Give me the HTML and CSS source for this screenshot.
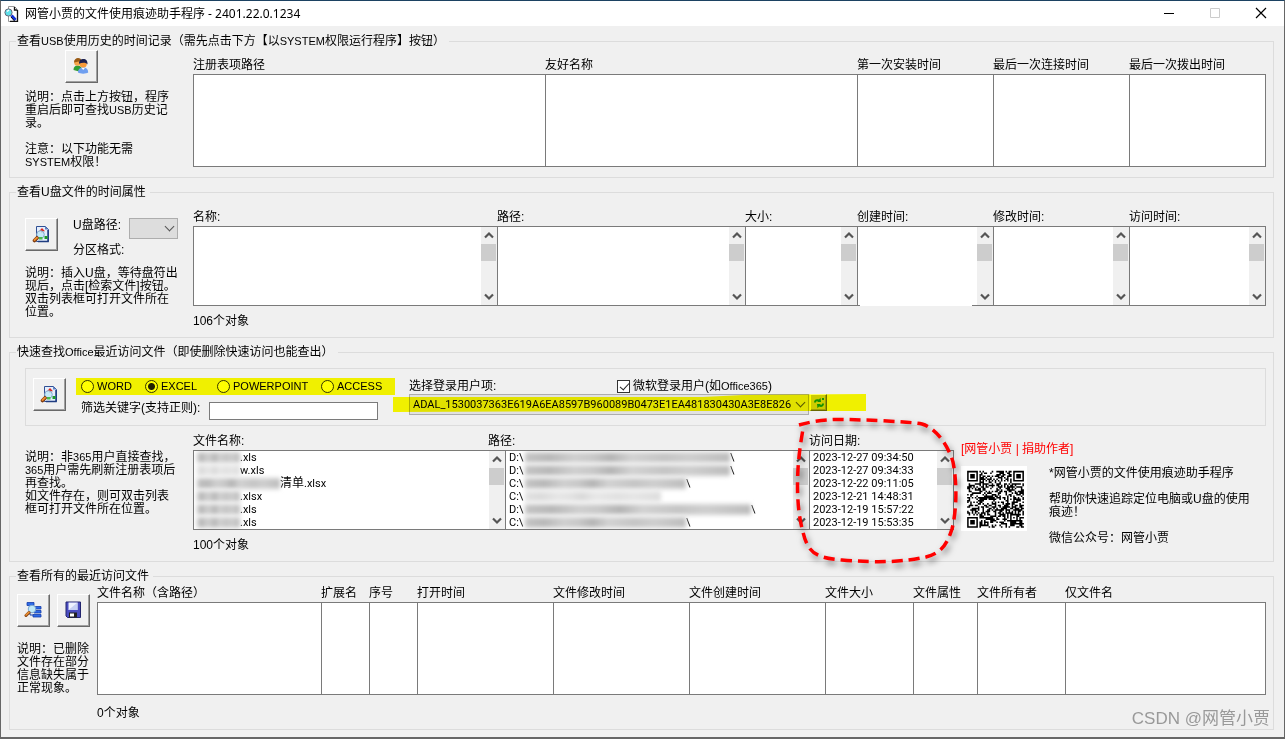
FILE: index.html
```html
<!DOCTYPE html>
<html lang="zh-CN">
<head>
<meta charset="utf-8">
<title>网管小贾的文件使用痕迹助手程序</title>
<link rel="stylesheet" href="styles.css">
</head>
<body>
<svg class="defs" aria-hidden="true">
  <symbol id="i-up" viewBox="0 0 16 17"><path d="M4 10.5 8 6.5l4 4" fill="none" stroke="#555" stroke-width="2.2"/></symbol>
  <symbol id="i-down" viewBox="0 0 16 17"><path d="M4 6.5l4 4 4-4" fill="none" stroke="#555" stroke-width="2.2"/></symbol>
  <symbol id="i-search" viewBox="0 0 18 18">
    <path d="M4.500 1.500h9l3 3v12h-12z" fill="#e4eefc" stroke="#2f4f94"/>
    <path d="M16 5v11.500H6" fill="none" stroke="#1f3c80" stroke-width="1.500"/>
    <path d="M13 1v3.500h3.500z" fill="#5f7fc0"/>
    <path d="M10 3l3 3.200H7z" fill="#e02418"/><path d="M9 6h2v2H9z" fill="#d43a20"/>
    <circle cx="8.500" cy="9.500" r="3.800" fill="#c0e8f8" fill-opacity=".9" stroke="#86a8cc"/>
    <path d="M12.500 11h3v3h-3z" fill="#1c9a28"/><path d="M7 12h3.500v2.500H7z" fill="#49b94a"/>
    <path d="M5 13 2.500 15.500" stroke="#7a3a10" stroke-width="3.600" stroke-linecap="round"/>
    <path d="M5 12.700 2.500 15" stroke="#ee8a2c" stroke-width="1.900" stroke-linecap="round"/>
  </symbol>
</svg>
<div class="window">
  <header class="titlebar">
    <svg class="app-icon" viewBox="0 0 16 16" aria-hidden="true">
      <path d="M4.500.500h6l3 3v12h-9z" fill="#fff" stroke="#999"/>
      <path d="M10.500 1v3H13M13.500 4v11.500H6" fill="none" stroke="#111" stroke-width="1.300"/>
      <circle cx="4.500" cy="6.500" r="3.600" fill="#5fe0ea" stroke="#667"/>
      <path d="M3 5.500 5 4" stroke="#fff" stroke-width="1.400"/>
      <path d="M7.500 9.500l4 4.500" stroke="#1030d8" stroke-width="3"/>
      <path d="M7 11l3.500 4" stroke="#111"/>
    </svg>
    <h1>网管小贾的文件使用痕迹助手程序 - 2401.22.0.1234</h1>
    <button class="sys" aria-label="最小化"><svg viewBox="0 0 12 12"><path d="M1 6.500h10" stroke="#000"/></svg></button>
    <button class="sys" aria-label="最大化" disabled><svg viewBox="0 0 12 12"><path d="M1.500 1.500h9v9h-9z" fill="none" stroke="#ccc"/></svg></button>
    <button class="sys" aria-label="关闭"><svg viewBox="0 0 12 12"><path d="M1 1l10 10M11 1 1 11" stroke="#000" stroke-width="1.200"/></svg></button>
  </header>

  <main>
    <fieldset>
      <legend>查看<span class="en">USB</span>使用历史的时间记录（需先点击下方【以<span class="en">SYSTEM</span>权限运行程序】按钮）</legend>
      <div class="group usb">
        <div class="side">
          <button class="tool" aria-label="以SYSTEM权限运行程序">
            <svg viewBox="0 0 18 18">
              <path d="M1.500 13c0-3 1.500-4.500 4-4.500S10 10 10 13l-3 1.500z" fill="#2f9e33"/>
              <circle cx="5.500" cy="5.500" r="3.300" fill="#f6a54a"/><path d="M2 5.500C2 2.500 4 1 6 1s3.500 1 3.500 3z" fill="#9a5a14"/>
              <path d="M6 15.500c0-3.500 2-5 5.200-5s5 1.500 5 5c-2 1.500-8 1.500-10.200 0z" fill="#6f9ff0"/>
              <path d="M9.500 11h3.400L11.200 13z" fill="#fff"/>
              <circle cx="11.200" cy="7" r="3.600" fill="#f79a3a"/><path d="M7 6.800C7 3.200 9 2 11.500 2S15.700 3.500 15.500 7.500c-1-2-5-2.500-8.500-.7z" fill="#1d2150"/>
            </svg>
          </button>
          <p>说明：点击上方按钮，程序<br>重启后即可查找<span class="en">USB</span>历史记<br>录。<br><br>注意：以下功能无需<br><span class="en">SYSTEM</span>权限！</p>
        </div>
        <div class="lists">
          <div class="heads cols-usb"><span>注册表项路径</span><span>友好名称</span><span>第一次安装时间</span><span>最后一次连接时间</span><span>最后一次拨出时间</span></div>
          <div class="boxes tall cols-usb"><ul></ul><ul></ul><ul></ul><ul></ul><ul></ul></div>
        </div>
      </div>
    </fieldset>

    <fieldset>
      <legend>查看U盘文件的时间属性</legend>
      <div class="group disk">
        <div class="side">
          <div class="disk-row">
            <button class="tool" aria-label="检索文件"><svg viewBox="0 0 18 18"><use href="#i-search"/></svg></button>
            <div class="disk-fields">
              <label for="drive">U盘路径:</label>
              <span class="combo off"><select id="drive" disabled><option></option></select></span>
              <span>分区格式:</span>
            </div>
          </div>
          <p>说明：插入U盘，等待盘符出<br>现后，点击[检索文件]按钮。<br>双击列表框可打开文件所在<br>位置。</p>
        </div>
        <div class="lists">
          <div class="heads cols-disk"><span>名称:</span><span>路径:</span><span>大小:</span><span>创建时间:</span><span>修改时间:</span><span>访问时间:</span></div>
          <div class="boxes cols-disk">
            <div class="box"><ul></ul><div class="scroll"><button aria-label="向上"><svg><use href="#i-up"/></svg></button><i></i><button aria-label="向下"><svg><use href="#i-down"/></svg></button></div></div>
            <div class="box"><ul></ul><div class="scroll"><button aria-label="向上"><svg><use href="#i-up"/></svg></button><i></i><button aria-label="向下"><svg><use href="#i-down"/></svg></button></div></div>
            <div class="box"><ul></ul><div class="scroll"><button aria-label="向上"><svg><use href="#i-up"/></svg></button><i></i><button aria-label="向下"><svg><use href="#i-down"/></svg></button></div></div>
            <div class="box erased"><ul></ul><div class="scroll"><button aria-label="向上"><svg><use href="#i-up"/></svg></button><i></i><button aria-label="向下"><svg><use href="#i-down"/></svg></button></div></div>
            <div class="box"><ul></ul><div class="scroll"><button aria-label="向上"><svg><use href="#i-up"/></svg></button><i></i><button aria-label="向下"><svg><use href="#i-down"/></svg></button></div></div>
            <div class="box"><ul></ul><div class="scroll"><button aria-label="向上"><svg><use href="#i-up"/></svg></button><i></i><button aria-label="向下"><svg><use href="#i-down"/></svg></button></div></div>
          </div>
          <output class="count">106个对象</output>
        </div>
      </div>
    </fieldset>

    <fieldset>
      <legend>快速查找<span class="en">Office</span>最近访问文件（即使删除快速访问也能查出）</legend>
      <div class="office">
        <div class="panel">
          <button class="tool" aria-label="查找"><svg viewBox="0 0 18 18"><use href="#i-search"/></svg></button>
          <div class="filters">
            <div class="apps" role="radiogroup" aria-label="程序">
              <label><input type="radio" name="app">WORD</label>
              <label><input type="radio" name="app" checked>EXCEL</label>
              <label><input type="radio" name="app">POWERPOINT</label>
              <label><input type="radio" name="app">ACCESS</label>
            </div>
            <div class="keyword"><label for="kw">筛选关键字(支持正则):</label><input id="kw" type="text"></div>
          </div>
          <div class="account">
            <div class="account-head">
              <label for="user">选择登录用户项:</label>
              <label class="ms"><input type="checkbox" checked><span>微软登录用户(如<span class="en">Office365</span>)</span></label>
            </div>
            <div class="account-row">
              <span class="combo"><select id="user"><option>ADAL_1530037363E619A6EA8597B960089B0473E1EA481830430A3E8E826</option></select></span>
              <button class="refresh" aria-label="刷新"><svg viewBox="0 0 12 12"><path d="M1 5.500C1 2.500 3.500 1.500 6 2.500L7.500.8 8 5H4l1-1C4 3.700 3 4.300 3 5.500zM11 6.500c0 3-2.500 4-5 3l-1.500 1.700L4 7h4L7 8c1 .3 2-.3 2-1.500z" fill="#16932c"/><path d="M9 1h2v2H9z" fill="#16932c"/></svg></button>
              <svg class="marker" viewBox="0 0 473 18" aria-hidden="true"><path d="M0 3H310L350 1 473 0V17H300L0 18z" fill="#ff0"/></svg>
            </div>
          </div>
        </div>
        <div class="recent">
          <div class="side">
            <p>说明：非<span class="en">365</span>用户直接查找，<br><span class="en">365</span>用户需先刷新注册表项后<br>再查找。<br>如文件存在，则可双击列表<br>框可打开文件所在位置。</p>
          </div>
          <div class="lists">
            <div class="heads heads-office"><span>文件名称:</span><span>路径:</span><span>访问日期:</span></div>
            <div class="boxes cols-office">
              <div class="box"><ul class="names">
                <li><b class="blur w1"></b>.xls</li><li><b class="blur w1 pale"></b>w.xls</li><li><b class="blur w2"></b><span class="zh">清单</span>.xlsx</li><li><b class="blur w1"></b>.xlsx</li><li><b class="blur w1"></b>.xls</li><li><b class="blur w1"></b>.xls</li></ul>
                <div class="scroll"><button aria-label="向上"><svg><use href="#i-up"/></svg></button><i></i><button aria-label="向下"><svg><use href="#i-down"/></svg></button></div></div>
              <div class="box"><ul class="paths">
                <li><em>D:\</em><b class="blur w5"></b>\</li><li><em>D:\</em><b class="blur w5"></b>\</li><li><em>C:\</em><b class="blur w4"></b>\</li><li><em>C:\</em><b class="blur w3 pale"></b></li><li><em>D:\</em><b class="blur w6"></b>\</li><li><em>C:\</em><b class="blur w4"></b>\</li></ul>
                <div class="scroll"><button aria-label="向上"><svg><use href="#i-up"/></svg></button><i></i><button aria-label="向下"><svg><use href="#i-down"/></svg></button></div></div>
              <div class="box"><ul>
                <li>2023-12-27 09:34:50</li><li>2023-12-27 09:34:33</li><li>2023-12-22 09:11:05</li><li>2023-12-21 14:48:31</li><li>2023-12-19 15:57:22</li><li>2023-12-19 15:53:35</li></ul>
                <div class="scroll"><button aria-label="向上"><svg><use href="#i-up"/></svg></button><i></i><button aria-label="向下"><svg><use href="#i-down"/></svg></button></div></div>
            </div>
            <output class="count">100个对象</output>
            <svg class="ring" viewBox="0 0 180 160" aria-hidden="true"><path d="M12 14C40 6 60 9 80 9c20 1 45 2 55 4 14 4 26 21 31 38 4 20 4 47-1 67-5 15-10 24-26 28-22 5-49 6-84 3C32 147 21 144 16 121 10 100 10 75 11 58c1-16 3-28 5-40" fill="none" stroke="#f00" stroke-width="3.500" stroke-dasharray="11 6"/></svg>
          </div>
          <div class="about">
            <a href="#donate">[网管小贾 | 捐助作者]</a>
            <div class="about-row">
              <svg id="qr" viewBox="-4 -3 43 42" role="img" aria-label="二维码"></svg>
              <p>*网管小贾的文件使用痕迹助手程序<br><br>帮助你快速追踪定位电脑或U盘的使用<br>痕迹！<br><br>微信公众号：网管小贾</p>
            </div>
          </div>
        </div>
      </div>
    </fieldset>

    <fieldset>
      <legend>查看所有的最近访问文件</legend>
      <div class="group all">
        <div class="side">
          <div class="tools">
            <button class="tool" aria-label="查询"><svg viewBox="0 0 18 18">
              <path d="M3 1.500h7v3H3zM10 5.500h7v2.500h-7zM10 9.500h7V12h-7zM9 13.500h8V16H9z" fill="#2d6be8" stroke="#143ca8" stroke-width=".8"/><path d="M6 5v9h3" fill="none" stroke="#143ca8"/>
              <circle cx="8" cy="8" r="3.800" fill="#bfeaf8" stroke="#7aa4d0"/>
              <path d="M5 11.500 2 14.500" stroke="#8a4412" stroke-width="3" stroke-linecap="round"/><path d="M5 11.200 2 14" stroke="#f09434" stroke-width="1.500" stroke-linecap="round"/></svg></button>
            <button class="tool" aria-label="保存"><svg viewBox="0 0 18 18">
              <path d="M2 1h14.500v15.500H3.500L2 15z" fill="#4a4cc0" stroke="#22246e"/>
              <path d="M4.500 1.500h9V9h-9z" fill="#eef2ff"/><path d="M13.500 1.500V9h-9z" fill="#c6d0f4"/>
              <path d="M5 11.500h8v5H5z" fill="#222"/><path d="M6 12.500h4v3H6z" fill="#fff"/></svg></button>
          </div>
          <p>说明：已删除<br>文件存在部分<br>信息缺失属于<br>正常现象。</p>
        </div>
        <div class="lists">
          <div class="heads cols-all"><span>文件名称（含路径）</span><span>扩展名</span><span>序号</span><span>打开时间</span><span>文件修改时间</span><span>文件创建时间</span><span>文件大小</span><span>文件属性</span><span>文件所有者</span><span>仅文件名</span></div>
          <div class="boxes tall cols-all"><ul></ul><ul></ul><ul></ul><ul></ul><ul></ul><ul></ul><ul></ul><ul></ul><ul></ul><ul></ul></div>
          <output class="count roomy">0个对象</output>
        </div>
      </div>
    </fieldset>
  </main>
  <div class="watermark">CSDN @网管小贾</div>
</div>
<script src="qr.js"></script>
</body>
</html>
```
FILE: styles.css
```css
* { box-sizing: border-box; }
body {
  margin: 0;
  background: #f0f0f0;
  color: #000;
  font: 12px/13px "Liberation Sans", "Noto Sans CJK SC", sans-serif;
  text-spacing-trim: space-all;
}
button, input, select { font: inherit; color: inherit; margin: 0; padding: 0; }
p, ul, h1 { margin: 0; padding: 0; }
ul { list-style: none; }
svg { display: block; }
.defs { position: absolute; width: 0; height: 0; }
.en { font-size: 11px; }

.window {
  position: relative;
  min-height: 100vh;
  border: 1px solid #666;
  border-top-color: #1c4262;
  border-bottom-width: 2px;
}
.titlebar {
  display: flex;
  align-items: center;
  height: 25px;
  padding-left: 3px;
  background: #fff;
}
.app-icon { width: 16px; height: 16px; }
.titlebar h1 {
  flex: 1;
  margin-left: 5px;
  font: 12px/16px "Noto Sans", "Noto Sans CJK SC", sans-serif;
}
.sys {
  display: grid;
  place-items: center;
  width: 46px;
  height: 25px;
  padding-bottom: 1px;
  border: 0;
  background: none;
}
.sys svg { width: 12px; height: 12px; }

main {
  display: flex;
  flex-direction: column;
  gap: 8px;
  padding: 9px 10px 7px 8px;
}
fieldset {
  min-width: 0;
  margin: 0;
  padding: 0;
  border: 1px solid #dcdcdc;
}
legend { margin-left: 6px; padding: 0 4px 0 1px; white-space: nowrap; }

.group { display: flex; padding: 0 7px 0 15px; }
.side { flex: none; width: 168px; white-space: nowrap; }
.lists { flex: 1; min-width: 0; position: relative; }
.usb { padding-bottom: 8px; }
.usb .side { padding-top: 2px; }
.usb .tool { margin-left: 40px; }
.usb .side p { margin-top: 8px; }
.usb .lists { padding-top: 11px; }
.disk { padding-top: 12px; padding-bottom: 9px; }
.all { padding: 4px 7px 9px 7px; }
.all .side { width: 80px; padding-top: 7px; }
.all .side p { margin-top: 16px; }
.tools { display: flex; gap: 7px; }

.tool {
  display: grid;
  place-items: center;
  flex: none;
  width: 33px;
  height: 33px;
  padding: 0 1px 1px 0;
  border: 1px solid;
  border-color: #fff #696969 #696969 #fff;
  background: #f0f0f0;
  box-shadow: inset -1px -1px #a0a0a0;
}
.tool svg { width: 18px; height: 18px; }

.disk-row { display: flex; gap: 15px; padding-top: 7px; }
.disk-fields {
  display: grid;
  grid-template-columns: 56px 49px;
  row-gap: 4px;
  line-height: 15px;
}
.disk .side p { margin-top: 9px; }

.combo { position: relative; display: block; }
.combo select {
  display: block;
  width: 100%;
  height: 21px;
  padding-left: 3px;
  border: 1px solid #adadad;
  border-radius: 0;
  background: #e1e1e1;
  appearance: none;
  font: 11px/13px Roboto, sans-serif;
}
.combo::after {
  content: "";
  position: absolute;
  top: 5px;
  right: 5px;
  width: 6px;
  height: 6px;
  border: solid #555;
  border-width: 0 1px 1px 0;
  transform: rotate(45deg);
}
.combo.off select { background: #ddd; opacity: 1; }

.heads, .boxes { display: grid; }
.heads { margin-bottom: 2px; padding-right: 1px; white-space: nowrap; }
.cols-usb { grid-template-columns: 352fr 312fr 136fr 136fr 136fr; }
.cols-disk { grid-template-columns: 304fr 248fr 112fr 136fr 136fr 136fr; }
.cols-office { grid-template-columns: 312fr 304fr 144fr; }
.heads-office { grid-template-columns: 295fr 321fr 144fr; }
.cols-all { grid-template-columns: 224fr 48fr 48fr 136fr 136fr 136fr 88fr 64fr 88fr 200fr; }
.boxes {
  min-height: 80px;
  border: 1px solid #7a7a7a;
  border-left: 0;
  background: #fff;
}
.boxes.tall { min-height: 93px; }
.boxes > * { min-width: 0; border-left: 1px solid #7a7a7a; }
.box { position: relative; display: flex; height: 78px; }
.box ul {
  flex: 1;
  min-width: 0;
  padding: 0 0 0 3px;
  overflow: hidden;
  white-space: nowrap;
  font: 11px/13px Roboto, "Noto Sans CJK SC", sans-serif;
}
.box li { display: flex; height: 13px; }
.zh { font-size: 12px; }
.box.erased::after {
  content: "";
  position: absolute;
  left: 2px;
  right: 21px;
  bottom: -1px;
  height: 1px;
  background: #fff;
}
.scroll {
  display: grid;
  grid-template-rows: 17px 17px 1fr;
  flex: none;
  width: 16px;
  background: #f0f0f0;
}
.scroll i { margin-right: 1px; background: #cdcdcd; }
.scroll button { border: 0; background: none; align-self: end; height: 17px; }
.scroll svg { width: 16px; height: 17px; }
.count { display: block; margin-top: 9px; }
.count.roomy { margin-top: 12px; }

.blur {
  flex: none;
  height: 13px;
  background: linear-gradient(90deg, #c4c4c4, #b8b8b8 12%, #cfcfcf 24%, #c8c8c8 33%, #b4b4b4 42%, #d2d2d2 52%, #c4c4c4 68%, #cecece 80%, #bcbcbc);
  border: solid #e8e8e8;
  border-width: 2px 0;
  filter: blur(2px);
}
.blur.pale { opacity: .5; }
.w1 { width: 43px; }
.w2 { width: 83px; }
.w3 { width: 136px; }
.w4 { width: 161px; }
.w5 { width: 205px; }
.w6 { width: 226px; }
.paths em { width: 16px; font-style: normal; }

.office { padding: 9px 7px 9px 15px; }
.panel {
  display: flex;
  padding: 9px 7px 5px;
  border: 1px solid #dcdcdc;
}
.filters { width: 319px; margin: 0 14px 0 10px; }
.apps {
  display: grid;
  grid-template-columns: 64px 72px 104px 1fr;
  align-items: center;
  height: 17px;
  padding-left: 5px;
  background: #f0f000;
  font-size: 11px;
}
.apps label, .ms { display: flex; align-items: center; gap: 3px; }
.apps input, .ms input {
  appearance: none;
  width: 13px;
  height: 13px;
  border: 1px solid #333;
}
.apps input { border-radius: 50%; border-color: #333300; background: #ff0; }
.apps input:checked { background: radial-gradient(circle, #222200 3px, #ff0 4px); }
.ms input { position: relative; background: #fff; }
.ms input:checked::after {
  content: "";
  position: absolute;
  left: 4px;
  top: 0;
  width: 4px;
  height: 8px;
  border: solid #222;
  border-width: 0 1px 1px 0;
  transform: rotate(42deg);
}
.keyword {
  display: grid;
  grid-template-columns: 128px 169px;
  margin-top: 7px;
  padding-left: 5px;
  white-space: nowrap;
}
.keyword input {
  height: 18px;
  border: 1px solid #7a7a7a;
  background: #fff;
}
.account-head {
  display: grid;
  grid-template-columns: 208px auto;
  align-items: center;
  height: 16px;
  white-space: nowrap;
}
.account-row {
  position: relative;
  display: grid;
  grid-template-columns: 400px 17px;
  column-gap: 1px;
}
.refresh {
  display: grid;
  place-items: center;
  width: 17px;
  height: 17px;
  border: 1px solid;
  border-color: #fff #696969 #696969 #fff;
  background: #ccc;
  box-shadow: inset -1px -1px #a0a0a0;
}
.refresh svg { width: 12px; height: 12px; }
.marker {
  position: absolute;
  left: -16px;
  top: 0;
  width: 473px;
  height: 18px;
  mix-blend-mode: multiply;
  pointer-events: none;
}

.recent { display: flex; padding-top: 9px; }
.recent .side { padding-top: 16px; }
.ring {
  position: absolute;
  right: -13px;
  top: -24px;
  width: 180px;
  height: 160px;
  filter: drop-shadow(2px 4px 3px rgba(0, 0, 0, .5));
  pointer-events: none;
}
.about { flex: none; width: 312px; padding: 8px 0 0 7px; white-space: nowrap; }
.about a { color: #f00; text-decoration: none; }
.about-row { display: flex; gap: 22px; margin-top: 10px; }
.about-row p { padding-top: 1px; }
#qr { width: 66px; height: 65px; background: #fff; }

.watermark {
  position: absolute;
  right: 14px;
  bottom: 8px;
  color: #999;
  font: 17px/20px "Liberation Sans", "Noto Sans CJK SC", sans-serif;
}
```
FILE: qr.js
```js
// Draws the 37 x 37 module code: three finders, one alignment mark, timing lines and data.
(function () {
  var n = 37, seed = 20231227, d = "";
  function ring(x, y, cx, cy) {
    return Math.max(Math.abs(x - cx), Math.abs(y - cy));
  }
  function dark(x, y) {
    var centres = [[3, 3], [33, 3], [3, 33]];
    seed = (seed * 48271) % 2147483647;
    for (var i = 0; i < 3; i++) {
      var k = ring(x, y, centres[i][0], centres[i][1]);
      if (k <= 4) return k <= 1 || k === 3;
    }
    var a = ring(x, y, 30, 30);
    if (a <= 2) return a !== 1;
    if (x === 6 || y === 6) return (x + y) % 2 === 0;
    return (seed >> 12) % 2 === 0;
  }
  for (var y = 0; y < n; y++)
    for (var x = 0; x < n; x++)
      if (dark(x, y)) d += "M" + x + " " + y + "h1v1h-1z";
  var p = document.createElementNS("http://www.w3.org/2000/svg", "path");
  p.setAttribute("d", d);
  document.getElementById("qr").appendChild(p);
})();
```
